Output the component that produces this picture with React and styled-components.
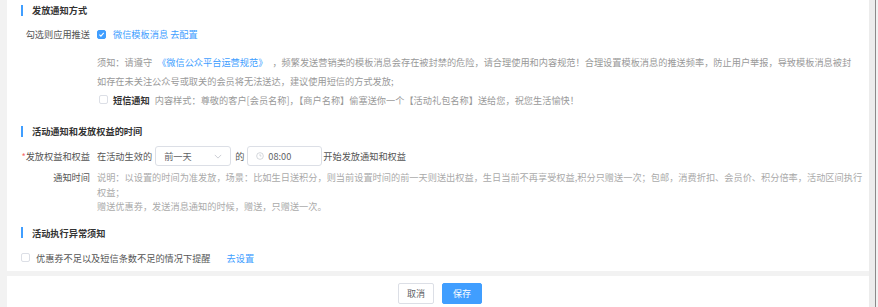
import styled, { createGlobalStyle } from "styled-components";

const GlobalStyle = createGlobalStyle`
  html, body {
    margin: 0;
    padding: 0;
    background: #f2f2f2;
  }
  body {
    font-family: "Noto Sans CJK SC", "Liberation Sans", sans-serif;
    font-size: 9.2px;
    color: #555;
  }
`;

const BLUE = "#409eff";

function CheckIcon() {
  return (
    <svg width="7" height="7" viewBox="0 0 10 10">
      <path d="M2 5.2 L4.2 7.3 L8.2 2.8" fill="none" stroke="#fff" strokeWidth="1.6" />
    </svg>
  );
}

function ClockIcon() {
  return (
    <svg width="8" height="8" viewBox="0 0 12 12">
      <circle cx="6" cy="6" r="5" fill="none" stroke="#c0c4cc" strokeWidth="1" />
      <path d="M6 3.2 V6 H8.2" fill="none" stroke="#c0c4cc" strokeWidth="1" />
    </svg>
  );
}

function Chevron() {
  return (
    <svg width="8" height="5" viewBox="0 0 10 6">
      <path d="M1 1 L5 5 L9 1" fill="none" stroke="#c0c4cc" strokeWidth="1" />
    </svg>
  );
}

export default function App() {
  return (
    <>
      <GlobalStyle />
      <Page>
        <Main>
          <Panel>
            <SectionTitle>发放通知方式</SectionTitle>
            <FormRow $height={20} $top={4}>
              <Label>勾选则应用推送</Label>
              <Inline>
                <Box $checked>
                  <CheckIcon />
                </Box>
                <LinkText>微信模板消息 去配置</LinkText>
              </Inline>
            </FormRow>
            <FormRow $top={8}>
              <Label />
              <Notice>
                <NoticeLine>
                  须知：请遵守<LinkText>《微信公众平台运营规范》</LinkText>，频繁发送营销类的模板消息会存在被封禁的危险，请合理使用和内容规范！合理设置模板消息的推送频率，防止用户举报，导致模板消息被封
                </NoticeLine>
                <NoticeLine>如存在未关注公众号或取关的会员将无法送达，建议使用短信的方式发放;</NoticeLine>
                <NoticeLine $indent>
                  <Box />
                  <Strong>短信通知</Strong>
                  <span>内容样式：尊敬的客户[会员名称]，【商户名称】偷塞送你一个【活动礼包名称】送给您，祝您生活愉快！</span>
                </NoticeLine>
              </Notice>
            </FormRow>

            <SectionTitle $top={12}>活动通知和发放权益的时间</SectionTitle>
            <FormRow $top={5}>
              <Label $tall>
                <Required>*</Required>发放权益和权益
                <br />
                通知时间
              </Label>
              <div>
                <Inline $gap={0}>
                  <span>在活动生效的</span>
                  <Select>
                    <span>前一天</span>
                    <Chevron />
                  </Select>
                  <span>的</span>
                  <TimeInput>
                    <ClockIcon />
                    <span>08:00</span>
                  </TimeInput>
                  <span>开始发放通知和权益</span>
                </Inline>
                <Hint>
                  <div>
                    说明：以设置的时间为准发放，场景：比如生日送积分，则当前设置时间的前一天则送出权益，生日当前不再享受权益,积分只赠送一次；包邮，消费折扣、会员价、积分倍率，活动区间执行
                  </div>
                  <div>权益；</div>
                  <div>赠送优惠券，发送消息通知的时候，赠送，只赠送一次。</div>
                </Hint>
              </div>
            </FormRow>

            <SectionTitle $top={9}>活动执行异常须知</SectionTitle>
            <CheckRow>
              <Box />
              <span>优惠券不足以及短信条数不足的情况下提醒</span>
              <LinkText $pad>去设置</LinkText>
            </CheckRow>
          </Panel>
          <Footer>
            <Button>取消</Button>
            <Button $primary>保存</Button>
          </Footer>
        </Main>
        <Gutter />
        <Edge />
      </Page>
    </>
  );
}

const Page = styled.div`
  display: flex;
  height: 307px;
  overflow: hidden;
`;

const Main = styled.div`
  width: 862px;
  margin-left: 7px;
  display: flex;
  flex-direction: column;
`;

const Panel = styled.div`
  background: #fff;
  padding: 0 14px;
  height: 271px;
  box-sizing: border-box;
  margin-bottom: 5px;
`;

const SectionTitle = styled.div`
  display: flex;
  align-items: center;
  height: 20px;
  margin-top: ${(p) => p.$top || 0}px;
  font-weight: bold;
  color: #333;

  &::before {
    content: "";
    width: 2px;
    height: 11px;
    background: ${BLUE};
    margin-right: 9px;
  }
`;

const FormRow = styled.div`
  display: grid;
  grid-template-columns: 69px 1fr;
  column-gap: 7px;
  margin-top: ${(p) => p.$top || 0}px;
  min-height: ${(p) => (p.$height ? `${p.$height}px` : "auto")};
`;

const Label = styled.div`
  text-align: right;
  line-height: ${(p) => (p.$tall ? "21px" : "20px")};
  color: #555;
  white-space: nowrap;
`;

const Required = styled.span`
  color: #f56c6c;
`;

const Inline = styled.div`
  display: flex;
  align-items: center;
  height: 20px;
  gap: ${(p) => p.$gap ?? 7}px;
  white-space: nowrap;
`;

const Box = styled.span`
  display: inline-flex;
  align-items: center;
  justify-content: center;
  width: 9px;
  height: 9px;
  box-sizing: border-box;
  border-radius: 2px;
  border: 1px solid ${(p) => (p.$checked ? BLUE : "#dcdfe6")};
  background: ${(p) => (p.$checked ? BLUE : "#fff")};
  flex-shrink: 0;
`;

const LinkText = styled.span`
  color: ${BLUE};
  margin-left: ${(p) => (p.$pad ? "10px" : "0")};
`;

const Notice = styled.div`
  color: #999;
`;

const NoticeLine = styled.div`
  display: flex;
  align-items: center;
  gap: 5px;
  height: 19px;
  white-space: nowrap;
  padding-left: ${(p) => (p.$indent ? "2px" : "0")};
`;

const Strong = styled.span`
  color: #333;
  font-weight: bold;
`;

const Select = styled.div`
  display: flex;
  align-items: center;
  justify-content: space-between;
  width: 76px;
  height: 20px;
  box-sizing: border-box;
  margin: 0 4px 0 3px;
  padding: 0 8px 0 8px;
  border: 1px solid #dcdfe6;
  border-radius: 3px;
  color: #606266;
`;

const TimeInput = styled.div`
  display: flex;
  align-items: center;
  gap: 4px;
  width: 75px;
  height: 20px;
  box-sizing: border-box;
  margin: 0 1px 0 3px;
  padding-left: 8px;
  border: 1px solid #dcdfe6;
  border-radius: 3px;
  color: #606266;
`;

const Hint = styled.div`
  margin-top: 4px;
  color: #aaa;
  line-height: 14.5px;
  white-space: nowrap;
`;

const CheckRow = styled.div`
  display: flex;
  align-items: center;
  gap: 6px;
  height: 20px;
  margin-top: 5px;
  color: #555;
`;

const Footer = styled.div`
  flex: 1;
  background: #fff;
  display: flex;
  justify-content: center;
  align-items: flex-start;
  gap: 8px;
  padding-top: 7px;
  padding-left: 4px;
`;

const Button = styled.button`
  height: 21px;
  padding: 0 ${(p) => (p.$primary ? "10px" : "8px")};
  min-width: ${(p) => (p.$primary ? "36px" : "35px")};
  font-family: inherit;
  font-size: 9px;
  border-radius: 2px;
  border: 1px solid ${(p) => (p.$primary ? BLUE : "#dcdfe6")};
  background: ${(p) => (p.$primary ? BLUE : "#fff")};
  color: ${(p) => (p.$primary ? "#fff" : "#606266")};
`;

const Gutter = styled.div`
  width: 6px;
  background: #ececec;
`;

const Edge = styled.div`
  width: 1px;
  background: #8a8a8a;
  margin-right: 2px;
`;
